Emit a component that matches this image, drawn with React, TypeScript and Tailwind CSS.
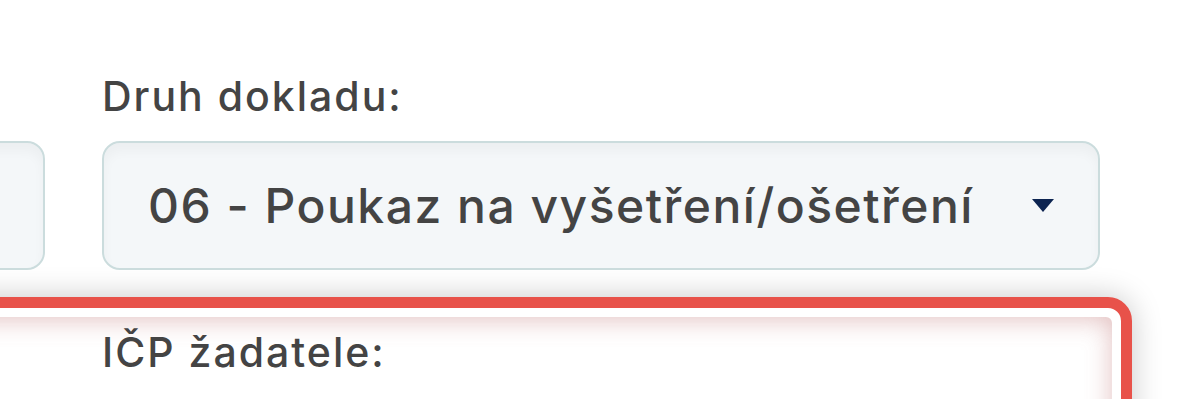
export default function App() {
  return (
    <div className="w-[1200px] h-[399px] overflow-hidden bg-white font-['Inter',sans-serif] text-[#444444]">
      <div className="pt-[72px] -ml-[300px] flex gap-[57px]">
        <div className="w-[345px] shrink-0">
          <div className="text-[41px] leading-[1.2] h-[49px]">&nbsp;</div>
          <div className="mt-[20px] h-[129px] rounded-[18px] border-2 border-[#cbdcdd] bg-[#f4f7f9] shadow-[inset_0_8px_12px_rgba(0,0,0,0.035)]" />
        </div>
        <div className="w-[998px] shrink-0">
          <label className="block text-[41px] leading-[1.2] font-medium tracking-[2px]">Druh dokladu:</label>
          <div className="mt-[20px] h-[129px] rounded-[18px] border-2 border-[#cbdcdd] bg-[#f4f7f9] shadow-[inset_0_8px_12px_rgba(0,0,0,0.035)] flex items-center justify-between pl-[44px] pr-[44px]">
            <span className="text-[48px] leading-none font-medium tracking-[1.5px]">06 - Poukaz na vyšetření/ošetření</span>
            <svg width="22" height="13" viewBox="0 0 22 13" className="shrink-0">
              <path d="M0 0 H22 L11 13 Z" fill="#0c2451" />
            </svg>
          </div>
        </div>
      </div>
      <div className="mt-[27px] -ml-[300px] w-[1432px] rounded-[24px] border-[11px] border-[#e8524a] bg-white p-[9px] shadow-[0_0_30px_rgba(0,0,0,0.22)]">
        <div className="rounded-[6px] bg-white shadow-[inset_0_2px_26px_rgba(185,100,100,0.42)] pl-[382px] pt-[11px] pb-[40px]">
          <label className="block text-[41px] leading-[1.2] font-medium tracking-[2px]">IČP žadatele:</label>
          <div className="h-[120px]" />
        </div>
      </div>
    </div>
  );
}
